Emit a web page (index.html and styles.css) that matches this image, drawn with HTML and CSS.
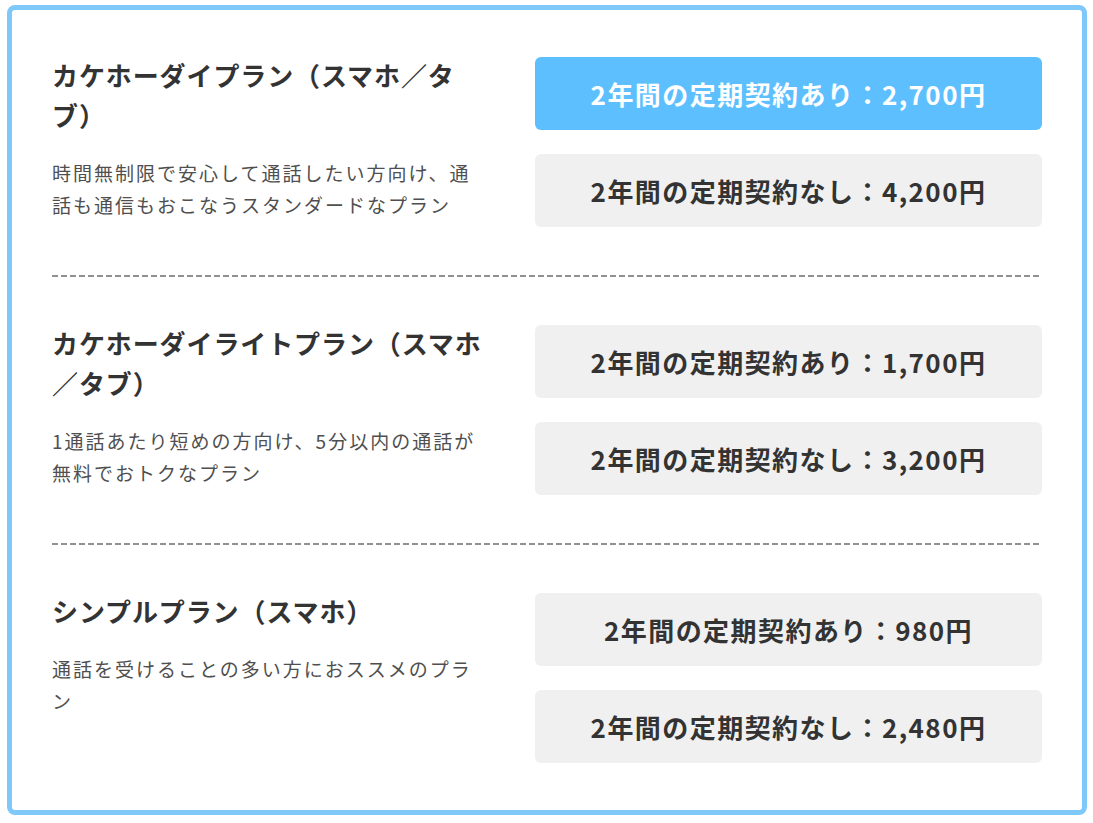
FILE: index.html
```html
<!DOCTYPE html>
<html lang="ja">
<head>
<meta charset="utf-8">
<title>料金プラン</title>
<link rel="stylesheet" href="styles.css">
</head>
<body>
<div class="plans">
  <section class="plan">
    <div class="info">
      <h2 class="title">カケホーダイプラン（スマホ／タブ）</h2>
      <p class="desc">時間無制限で安心して通話したい方向け、通話も通信もおこなうスタンダードなプラン</p>
    </div>
    <div class="prices">
      <div class="price active">2年間の定期契約あり：2,700円</div>
      <div class="price">2年間の定期契約なし：4,200円</div>
    </div>
  </section>
  <div class="sep"></div>
  <section class="plan">
    <div class="info">
      <h2 class="title">カケホーダイライトプラン（スマホ／タブ）</h2>
      <p class="desc">1通話あたり短めの方向け、5分以内の通話が無料でおトクなプラン</p>
    </div>
    <div class="prices">
      <div class="price">2年間の定期契約あり：1,700円</div>
      <div class="price">2年間の定期契約なし：3,200円</div>
    </div>
  </section>
  <div class="sep"></div>
  <section class="plan">
    <div class="info">
      <h2 class="title">シンプルプラン（スマホ）</h2>
      <p class="desc">通話を受けることの多い方におススメのプラン</p>
    </div>
    <div class="prices">
      <div class="price">2年間の定期契約あり：980円</div>
      <div class="price">2年間の定期契約なし：2,480円</div>
    </div>
  </section>
</div>
</body>
</html>
```
FILE: styles.css
```css
html, body {
  background: #ffffff;
}
body {
  margin: 5px 6px 0 7px;
  font-family: "Noto Sans CJK JP", "Noto Sans", sans-serif;
  color: #333333;
}
.plans {
  border: 5px solid #7fc8fa;
  border-radius: 8px;
  padding: 0 40px;
}
.plan {
  display: grid;
  grid-template-columns: 436px 1fr;
  column-gap: 47px;
  padding: 48px 0;
}
.plan:first-child {
  padding-top: 47px;
}
.plan:last-child {
  padding-bottom: 47px;
}
.sep {
  height: 2px;
  background: repeating-linear-gradient(to right, #919191 0 6px, transparent 6px 9px);
}
.title {
  margin: -2px 0 0;
  font-size: 26px;
  font-weight: 700;
  letter-spacing: 0.9px;
  line-height: 40px;
  color: #333333;
}
.desc {
  margin: 22px 0 0;
  font-size: 19px;
  font-weight: 400;
  letter-spacing: 2px;
  line-height: 32px;
  color: #4f4f4f;
}
.prices {
  display: flex;
  flex-direction: column;
  gap: 24px;
}
.price {
  height: 73px;
  border-radius: 6px;
  background: #f0f0f0;
  display: flex;
  align-items: center;
  justify-content: center;
  font-size: 26px;
  font-weight: 700;
  letter-spacing: 1.45px;
  color: #333333;
}
.price.active {
  background: #5ebfff;
  color: #ffffff;
}
```
